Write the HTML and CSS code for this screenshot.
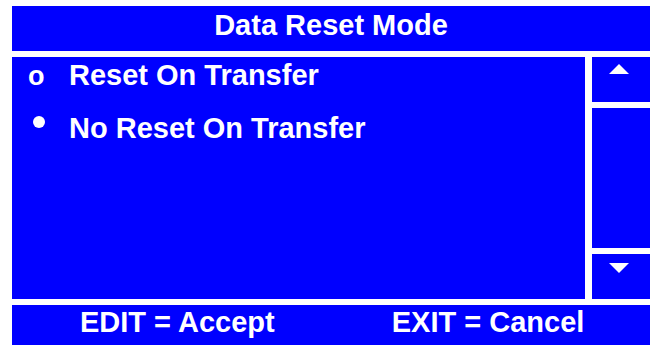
FILE: index.html
```html
<!DOCTYPE html>
<html>
<head>
<meta charset="UTF-8">
<title>Data Reset Mode</title>
<meta name="viewport" content="width=device-width, initial-scale=1.0">
<link rel="stylesheet" href="styles.css">
</head>
<body>

	<div class="screen">
		<div class="title">Data Reset Mode</div>

		<div class="main">
			<ul class="options">
				<li class="option">
					<span class="mark">o</span>
					<span class="label">Reset On Transfer</span>
				</li>
				<li class="option">
					<span class="mark"><span class="dot"></span></span>
					<span class="label">No Reset On Transfer</span>
				</li>
			</ul>

			<div class="scroll">
				<div class="scroll-btn up">
					<svg width="20" height="10" viewBox="0 0 20 10"><polygon points="10,0 20,10 0,10" fill="#fff"/></svg>
				</div>
				<div class="scroll-track"></div>
				<div class="scroll-btn down">
					<svg width="20" height="10" viewBox="0 0 20 10"><polygon points="0,0 20,0 10,10" fill="#fff"/></svg>
				</div>
			</div>
		</div>

		<div class="footer">
			<span>EDIT = Accept</span>
			<span>EXIT = Cancel</span>
		</div>
	</div>

</body>
</html>
```

FILE: styles.css
```css
body {
	margin: 0;
	padding: 6px 0 0 12px;
	background: #fff;
	font-family: "Liberation Sans", Arial, sans-serif;
	font-weight: bold;
	color: #fff;
	overflow: hidden;
}

.screen {
	width: 638px;
}

.title {
	height: 45px;
	line-height: 38px;
	font-size: 29px;
	text-align: center;
	background-color: #0000ff;
}

.main {
	display: flex;
	gap: 7px;
	height: 242px;
	margin-top: 6px;
}

.options {
	flex: 0 0 573px;
	margin: 0;
	padding: 0;
	list-style: none;
	background-color: #0000ff;
}

.option {
	display: flex;
	align-items: flex-start;
	height: 36px;
	line-height: 36px;
	font-size: 29px;
	margin-bottom: 17px;
}

.mark {
	flex: 0 0 41px;
	padding-left: 16px;
	font-size: 27px;
	padding-top: 1px;
}

.dot {
	display: block;
	width: 12px;
	height: 12px;
	margin: 5px 0 0 5px;
	border-radius: 50%;
	background: #fff;
}

.scroll {
	flex: 1;
	display: flex;
	flex-direction: column;
	gap: 6px;
}

.scroll-btn {
	height: 45px;
	background-color: #0000ff;
	padding-left: 17px;
	box-sizing: border-box;
}

.scroll-btn svg {
	display: block;
}

.up {
	padding-top: 7px;
}

.down {
	padding-top: 9px;
}

.scroll-track {
	flex: 1;
	background-color: #0000ff;
}

.footer {
	display: flex;
	gap: 117px;
	height: 40px;
	margin-top: 6px;
	padding-left: 68px;
	line-height: 34px;
	font-size: 29px;
	background-color: #0000ff;
}
```
